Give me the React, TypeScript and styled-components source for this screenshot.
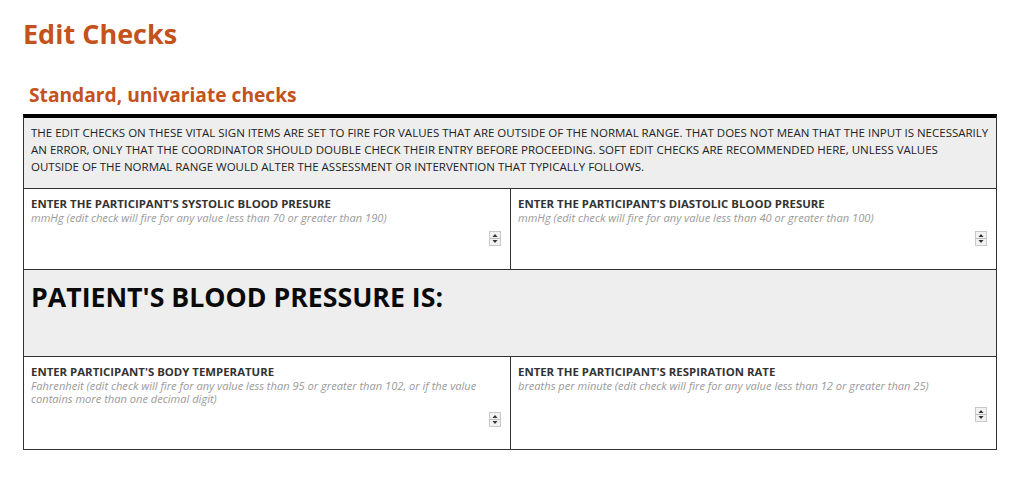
import React from "react";
import styled, { createGlobalStyle } from "styled-components";

const Global = createGlobalStyle`
  html, body { margin: 0; padding: 0; background: #fff; }
  body { font-family: "Open Sans", "Liberation Sans", sans-serif; color: #333; }
`;

const Page = styled.div`
  padding: 16px 27px 0 23px;
`;

const Title = styled.h1`
  margin: 0;
  font-size: 27px;
  line-height: 36px;
  font-weight: 700;
  color: #c4521b;
`;

const SectionTitle = styled.h2`
  margin: 29px 0 0 6px;
  font-size: 19.2px;
  line-height: 28px;
  font-weight: 700;
  color: #c4521b;
`;

const Table = styled.div`
  margin-top: 5px;
  border: 1px solid #333;
  border-top: 4px solid #000;
  display: grid;
  grid-template-columns: 486px 1fr;
`;

const Banner = styled.div<{ $h: number }>`
  grid-column: 1 / -1;
  background: #eeeeee;
  height: ${(p) => p.$h}px;
  box-sizing: border-box;
  padding: 6px 7px;
  border-bottom: 1px solid #333;
`;

const IntroText = styled.p`
  margin: 0;
  font-size: 11.5px;
  line-height: 17px;
  text-transform: uppercase;
  color: #222;
`;

const BigText = styled.p`
  margin: 0;
  padding-top: 4px;
  font-size: 26.7px;
  line-height: 34px;
  font-weight: 700;
  color: #0a0a0a;
`;

const Cell = styled.div<{ $h: number; $last?: boolean; $right?: boolean }>`
  height: ${(p) => p.$h}px;
  box-sizing: border-box;
  padding: 7px 9px 0 7px;
  border-bottom: ${(p) => (p.$last ? "none" : "1px solid #333")};
  border-left: ${(p) => (p.$right ? "1px solid #333" : "none")};
  display: flex;
  flex-direction: column;
`;

const Label = styled.div`
  font-size: 11.4px;
  line-height: 15px;
  font-weight: 700;
  color: #333;
`;

const Help = styled.div`
  font-size: 11.1px;
  line-height: 13px;
  font-style: italic;
  color: #9a9a9a;
`;

const InputRow = styled.div<{ $gap: number }>`
  margin-top: ${(p) => p.$gap}px;
  display: flex;
  justify-content: flex-end;
`;

const Spinner = styled.span`
  display: inline-flex;
  width: 12px;
  height: 15px;
`;

const SpinIcon = () => (
  <Spinner>
    <svg width="12" height="15" viewBox="0 0 12 15">
      <rect x="0.5" y="0.5" width="11" height="14" fill="#f2f2f2" stroke="#c8c8c8" />
      <line x1="1" y1="7.5" x2="11" y2="7.5" stroke="#bdbdbd" />
      <polygon points="3.5,6 8.5,6 6,3" fill="#333" />
      <polygon points="3.5,9 8.5,9 6,12" fill="#333" />
    </svg>
  </Spinner>
);

type FieldProps = {
  label: string;
  help: string;
  h: number;
  gap: number;
  right?: boolean;
  last?: boolean;
};

const Field = ({ label, help, h, gap, right, last }: FieldProps) => (
  <Cell $h={h} $right={right} $last={last}>
    <Label>{label}</Label>
    <Help>{help}</Help>
    <InputRow $gap={gap}>
      <SpinIcon />
    </InputRow>
  </Cell>
);

export default function App() {
  return (
    <>
      <Global />
      <Page>
        <Title>Edit Checks</Title>
        <SectionTitle>Standard, univariate checks</SectionTitle>
        <Table>
          <Banner $h={71}>
            <IntroText>
              The edit checks on these vital sign items are set to fire for values that are outside of the normal range. That does not mean that the input is necessarily an error, only that the coordinator should double check their entry before proceeding. Soft edit checks are recommended here, unless values
              <br />
              outside of the normal range would alter the assessment or intervention that typically follows.
            </IntroText>
          </Banner>
          <Field
            label="ENTER THE PARTICIPANT'S SYSTOLIC BLOOD PRESURE"
            help="mmHg (edit check will fire for any value less than 70 or greater than 190)"
            h={81}
            gap={7}
          />
          <Field
            label="ENTER THE PARTICIPANT'S DIASTOLIC BLOOD PRESURE"
            help="mmHg (edit check will fire for any value less than 40 or greater than 100)"
            h={81}
            gap={7}
            right
          />
          <Banner $h={87}>
            <BigText>PATIENT'S BLOOD PRESSURE IS:</BigText>
          </Banner>
          <Field
            label="ENTER PARTICIPANT'S BODY TEMPERATURE"
            help="Fahrenheit (edit check will fire for any value less than 95 or greater than 102, or if the value contains more than one decimal digit)"
            h={92}
            gap={7}
            last
          />
          <Field
            label="ENTER THE PARTICIPANT'S RESPIRATION RATE"
            help="breaths per minute (edit check will fire for any value less than 12 or greater than 25)"
            h={92}
            gap={15}
            right
            last
          />
        </Table>
      </Page>
    </>
  );
}
